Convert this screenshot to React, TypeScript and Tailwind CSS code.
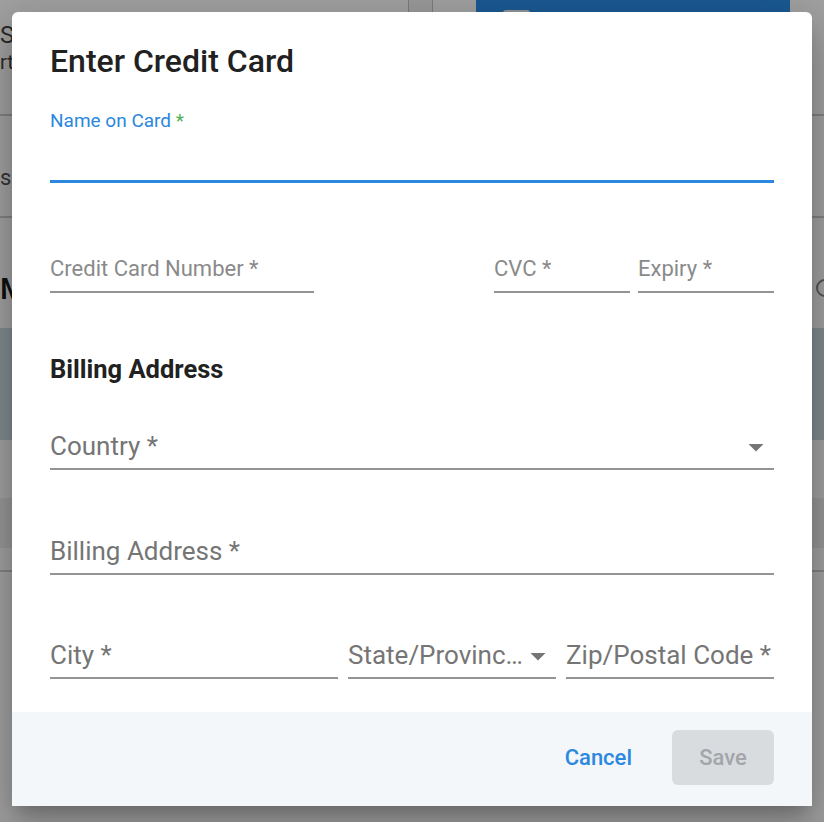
const ROBOTO = "font-['Roboto','Liberation_Sans',sans-serif]";

function ArrowDrop() {
  return (
    <svg
      viewBox="0 0 24 24"
      className="absolute right-0 top-1/2 h-9 w-9 -translate-y-1/2 fill-[#757575]"
    >
      <path d="M7 10l5 5 5-5z" />
    </svg>
  );
}

type FieldProps = {
  label: string;
  className?: string;
  small?: boolean;
  select?: boolean;
};

function Field({ label, className = "", small = false, select = false }: FieldProps) {
  return (
    <div
      className={`relative flex h-[44px] items-end border-b-2 border-[#949494] pb-[7px] ${className}`}
    >
      <span
        className={`block truncate leading-[30px] ${
          small ? "text-[22px] text-[#8a8a8a]" : "text-[26px] text-[#757575]"
        } ${select ? "pr-[30px]" : ""}`}
      >
        {label}
      </span>
      {select && <ArrowDrop />}
    </div>
  );
}

// the page sitting behind the modal
function BackgroundPage() {
  return (
    <div className="flex flex-col">
      <div className="flex h-[116px] border-b-2 border-[#cfcfcf]">
        <div className="flex w-[408px] flex-col pt-[20px] text-[#444]">
          <span className="text-[24px] leading-[30px]">S</span>
          <span className="text-[20px] leading-[24px]">rt</span>
        </div>
        <div className="h-[20px] w-[25px] border-x border-[#c4c4c4] bg-[#f4f4f4]" />
        <div className="flex flex-1 items-start pl-[43px] pr-[34px]">
          <div className="-mt-[20px] flex h-[56px] flex-1 items-end rounded bg-[#2b8fe9] pb-[10px] pl-[27px]">
            <div className="h-[16px] w-[27px] rounded-[3px] bg-[#e8eef4]" />
          </div>
        </div>
      </div>
      <div className="flex h-[102px] items-center border-b-2 border-[#cfcfcf] pt-[22px] text-[22px] text-[#555]">
        s
      </div>
      <div className="flex h-[110px] items-center justify-between pt-[30px]">
        <span className="text-[30px] font-medium text-[#1a1a1a]">M</span>
        <span className="-mr-[10px] h-[18px] w-[18px] rounded-full border-2 border-[#888]" />
      </div>
      <div className="h-[112px] bg-[#cbdce1]" />
      <div className="h-[58px]" />
      <div className="h-[50px] bg-[#efefef]" />
      <div className="h-[24px] border-b-2 border-[#d0d0d0]" />
    </div>
  );
}

export default function App() {
  return (
    <div className={`relative h-[822px] w-[824px] overflow-hidden bg-white ${ROBOTO}`}>
      <BackgroundPage />
      <div className="absolute inset-0 bg-black/[0.37]" />

      <div className="absolute left-[12px] top-[12px] flex h-[794px] w-[800px] flex-col overflow-hidden rounded-t-[6px] bg-white shadow-[0_11px_15px_-7px_rgba(0,0,0,0.2),0_24px_38px_3px_rgba(0,0,0,0.14),0_9px_46px_8px_rgba(0,0,0,0.12)]">
        <div className="flex-1 px-[38px] pt-[31px]">
          <h2 className="text-[32px] font-medium leading-[36px] text-[#212121]">
            Enter Credit Card
          </h2>

          <div className="mt-[30px]">
            <label className="block text-[19px] leading-[24px] text-[#2b88de]">
              Name on Card <span className="text-[#4caf50]">*</span>
            </label>
            <div className="h-[50px] border-b-[3px] border-[#2b88de]" />
          </div>

          <div className="mt-[66px] flex">
            <Field label="Credit Card Number *" small className="w-[264px]" />
            <div className="ml-auto flex gap-2">
              <Field label="CVC *" small className="w-[136px]" />
              <Field label="Expiry *" small className="w-[136px]" />
            </div>
          </div>

          <h3 className="mt-[61px] text-[25.5px] font-bold leading-[30px] text-[#212121]">
            Billing Address
          </h3>

          <Field label="Country *" select className="mt-[42px]" />
          <Field label="Billing Address *" className="mt-[61px]" />

          <div className="mt-[60px] flex gap-[10px]">
            <Field label="City *" className="w-[288px]" />
            <Field label="State/Province *" select className="w-[208px]" />
            <Field label="Zip/Postal Code *" className="w-[208px]" />
          </div>
        </div>

        <div className="flex h-[94px] items-start justify-end gap-10 bg-[#f4f7fa] pr-[38px] pt-[18px]">
          <button className="flex h-[55px] items-center text-[22px] font-medium text-[#2b88de]">
            Cancel
          </button>
          <button className="flex h-[55px] w-[102px] items-center justify-center rounded-[6px] bg-[#d9dcdf] text-[22px] font-medium text-[#a3a6a9]">
            Save
          </button>
        </div>
      </div>
    </div>
  );
}
